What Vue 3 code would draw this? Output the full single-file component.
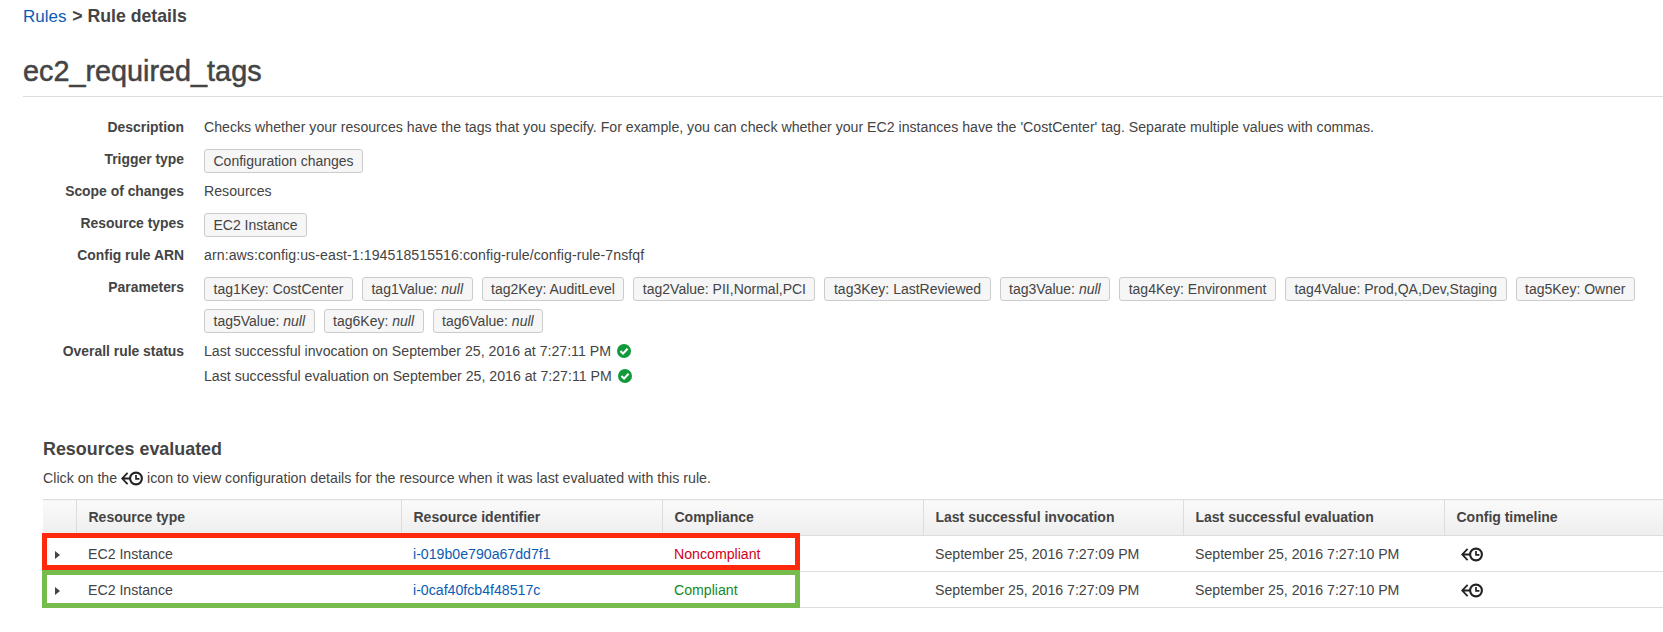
<script setup>
const tagRows = [
  { text: 'tag1Key: CostCenter' },
  { text: 'tag1Value: ', em: 'null' },
  { text: 'tag2Key: AuditLevel' },
  { text: 'tag2Value: PII,Normal,PCI' },
  { text: 'tag3Key: LastReviewed' },
  { text: 'tag3Value: ', em: 'null' },
  { text: 'tag4Key: Environment' },
  { text: 'tag4Value: Prod,QA,Dev,Staging' },
  { text: 'tag5Key: Owner' },
  { text: 'tag5Value: ', em: 'null' },
  { text: 'tag6Key: ', em: 'null' },
  { text: 'tag6Value: ', em: 'null' },
]

const resources = [
  { id: 'i-019b0e790a67dd7f1', status: 'Noncompliant', cls: 'bad' },
  { id: 'i-0caf40fcb4f48517c', status: 'Compliant', cls: 'good' },
]

const columns = ['Resource type', 'Resource identifier', 'Compliance', 'Last successful invocation', 'Last successful evaluation', 'Config timeline']
</script>

<template>
  <div class="page">
    <div class="crumbs"><a class="link">Rules</a> <b>&gt; Rule details</b></div>
    <h1>ec2_required_tags</h1>

    <div class="details">
      <div class="label">Description</div>
      <div class="value">Checks whether your resources have the tags that you specify. For example, you can check whether your EC2 instances have the 'CostCenter' tag. Separate multiple values with commas.</div>

      <div class="label chip-label">Trigger type</div>
      <div class="value chips"><span class="chip">Configuration changes</span></div>

      <div class="label">Scope of changes</div>
      <div class="value">Resources</div>

      <div class="label chip-label">Resource types</div>
      <div class="value chips"><span class="chip">EC2 Instance</span></div>

      <div class="label">Config rule ARN</div>
      <div class="value arn">arn:aws:config:us-east-1:194518515516:config-rule/config-rule-7nsfqf</div>

      <div class="label chip-label">Parameters</div>
      <div class="value chips params">
        <span v-for="tag in tagRows" :key="tag.text + tag.em" class="chip">{{ tag.text }}<em v-if="tag.em">{{ tag.em }}</em></span>
      </div>

      <div class="label status-label">Overall rule status</div>
      <div class="value status">
        <div v-for="kind in ['invocation', 'evaluation']" :key="kind" class="status-line">
          Last successful {{ kind }} on September 25, 2016 at 7:27:11 PM
          <svg class="check" viewBox="0 0 14 14" width="14" height="14">
            <circle cx="7" cy="7" r="7" fill="#12993b" />
            <path d="M3.4 7.1l2.6 2.5 4.6-4.9" fill="none" stroke="#fff" stroke-width="2.1" />
          </svg>
        </div>
      </div>
    </div>

    <section class="resources">
      <h2>Resources evaluated</h2>
      <p class="hint">
        Click on the
        <svg class="history" viewBox="0 0 22 15" width="22" height="15">
          <path d="M6.6 1.8L1.2 7.5 6.6 13.2M1.2 7.5H9" fill="none" stroke="#222" stroke-width="1.8" />
          <circle cx="15" cy="7.5" r="5.9" fill="none" stroke="#222" stroke-width="2.1" />
          <path d="M15 4V7.9H18.4" fill="none" stroke="#222" stroke-width="1.7" />
        </svg>
        icon to view configuration details for the resource when it was last evaluated with this rule.
      </p>

      <div class="table-wrap">
        <table>
          <thead>
            <tr>
              <th class="arrow-col"></th>
              <th v-for="col in columns" :key="col">{{ col }}</th>
            </tr>
          </thead>
          <tbody>
            <tr v-for="res in resources" :key="res.id">
              <td class="arrow-col"><span class="arrow"></span></td>
              <td>EC2 Instance</td>
              <td><a class="link">{{ res.id }}</a></td>
              <td :class="res.cls">{{ res.status }}</td>
              <td>September 25, 2016 7:27:09 PM</td>
              <td>September 25, 2016 7:27:10 PM</td>
              <td>
                <svg class="history row-icon" viewBox="0 0 22 15" width="22" height="15">
                  <path d="M6.6 1.8L1.2 7.5 6.6 13.2M1.2 7.5H9" fill="none" stroke="#222" stroke-width="1.8" />
                  <circle cx="15" cy="7.5" r="5.9" fill="none" stroke="#222" stroke-width="2.1" />
                  <path d="M15 4V7.9H18.4" fill="none" stroke="#222" stroke-width="1.7" />
                </svg>
              </td>
            </tr>
          </tbody>
        </table>
        <div class="mark mark-red"></div>
        <div class="mark mark-green"></div>
      </div>
    </section>
  </div>
</template>

<style scoped>
.page {
  width: 1663px;
  height: 632px;
  overflow: hidden;
  background: #fff;
  color: #444;
  font-family: "Liberation Sans", Arial, sans-serif;
  font-size: 14.15px;
  box-sizing: border-box;
  padding-left: 23px;
}
.link {
  color: #0b5cb5;
}
.crumbs {
  font-size: 17px;
  line-height: 20px;
  padding-top: 6px;
  color: #444;
}
.crumbs b {
  font-size: 17.7px;
  margin-left: 1px;
}
h1 {
  margin: 0;
  padding: 26px 0 7px;
  font-size: 28.8px;
  line-height: 36px;
  font-weight: 400;
  -webkit-text-stroke: 0.5px #444;
  color: #444;
  border-bottom: 1px solid #ddd;
}
.details {
  display: grid;
  grid-template-columns: 161px 1fr;
  column-gap: 20px;
  padding-top: 20px;
}
.label {
  text-align: right;
  font-size: 13.9px;
  font-weight: 700;
  line-height: 20px;
  margin-bottom: 8.5px;
}
.chip-label {
  padding-top: 3px;
}
.status-label {
  line-height: 25px;
}
.value {
  line-height: 20px;
  margin-bottom: 8.5px;
}
.arn {
  letter-spacing: 0.07px;
}
.chips {
  display: flex;
  flex-wrap: wrap;
  gap: 8px 9px;
  padding-top: 3px;
  font-size: 14px;
}
.params {
  margin-bottom: 6px;
}
.chip {
  display: inline-block;
  height: 24px;
  line-height: 22px;
  padding: 0 8.5px;
  box-sizing: border-box;
  background: #f6f6f6;
  border: 1px solid #ccc;
  border-radius: 3px;
  white-space: nowrap;
}
.status-line {
  display: flex;
  align-items: center;
  gap: 6px;
  height: 25px;
}
.resources {
  padding-left: 20px;
  margin-top: 42px;
}
h2 {
  margin: 0;
  font-size: 17.9px;
  line-height: 20px;
  font-weight: 700;
  color: #444;
}
.hint {
  margin: 9px 0 11px;
  line-height: 20px;
  font-size: 14.2px;
}
.history {
  vertical-align: -3px;
}
.table-wrap {
  position: relative;
}
table {
  border-collapse: collapse;
  table-layout: fixed;
  width: 1620px;
}
th {
  box-sizing: border-box;
  height: 36px;
  padding: 0 12px 2px;
  text-align: left;
  font-size: 14px;
  font-weight: 700;
  background: linear-gradient(#fafafa, #eee);
  border-top: 1px solid #ddd;
  border-bottom: 1px solid #ddd;
  border-left: 1px solid #ddd;
}
th.arrow-col {
  width: 33px;
  border-left: 0;
}
th:nth-child(2) {
  width: 325px;
}
th:nth-child(3),
th:nth-child(4),
th:nth-child(6) {
  width: 261px;
}
th:nth-child(5) {
  width: 260px;
}
td {
  box-sizing: border-box;
  height: 36px;
  padding: 0 12px;
  border-bottom: 1px solid #ddd;
  white-space: nowrap;
}
.arrow {
  display: inline-block;
  border-left: 5px solid #444;
  border-top: 4px solid transparent;
  border-bottom: 4px solid transparent;
}
.bad {
  color: #d0021b;
}
.good {
  color: #138a1f;
}
.row-icon {
  margin-left: 5px;
  vertical-align: middle;
}
.mark {
  position: absolute;
  left: -1px;
  width: 758px;
  box-sizing: border-box;
  border: 5px solid;
  pointer-events: none;
}
.mark-red {
  top: 34px;
  height: 37px;
  border-color: #ff2a0e;
}
.mark-green {
  top: 71px;
  height: 38px;
  border-color: #76bc4d;
}
</style>
